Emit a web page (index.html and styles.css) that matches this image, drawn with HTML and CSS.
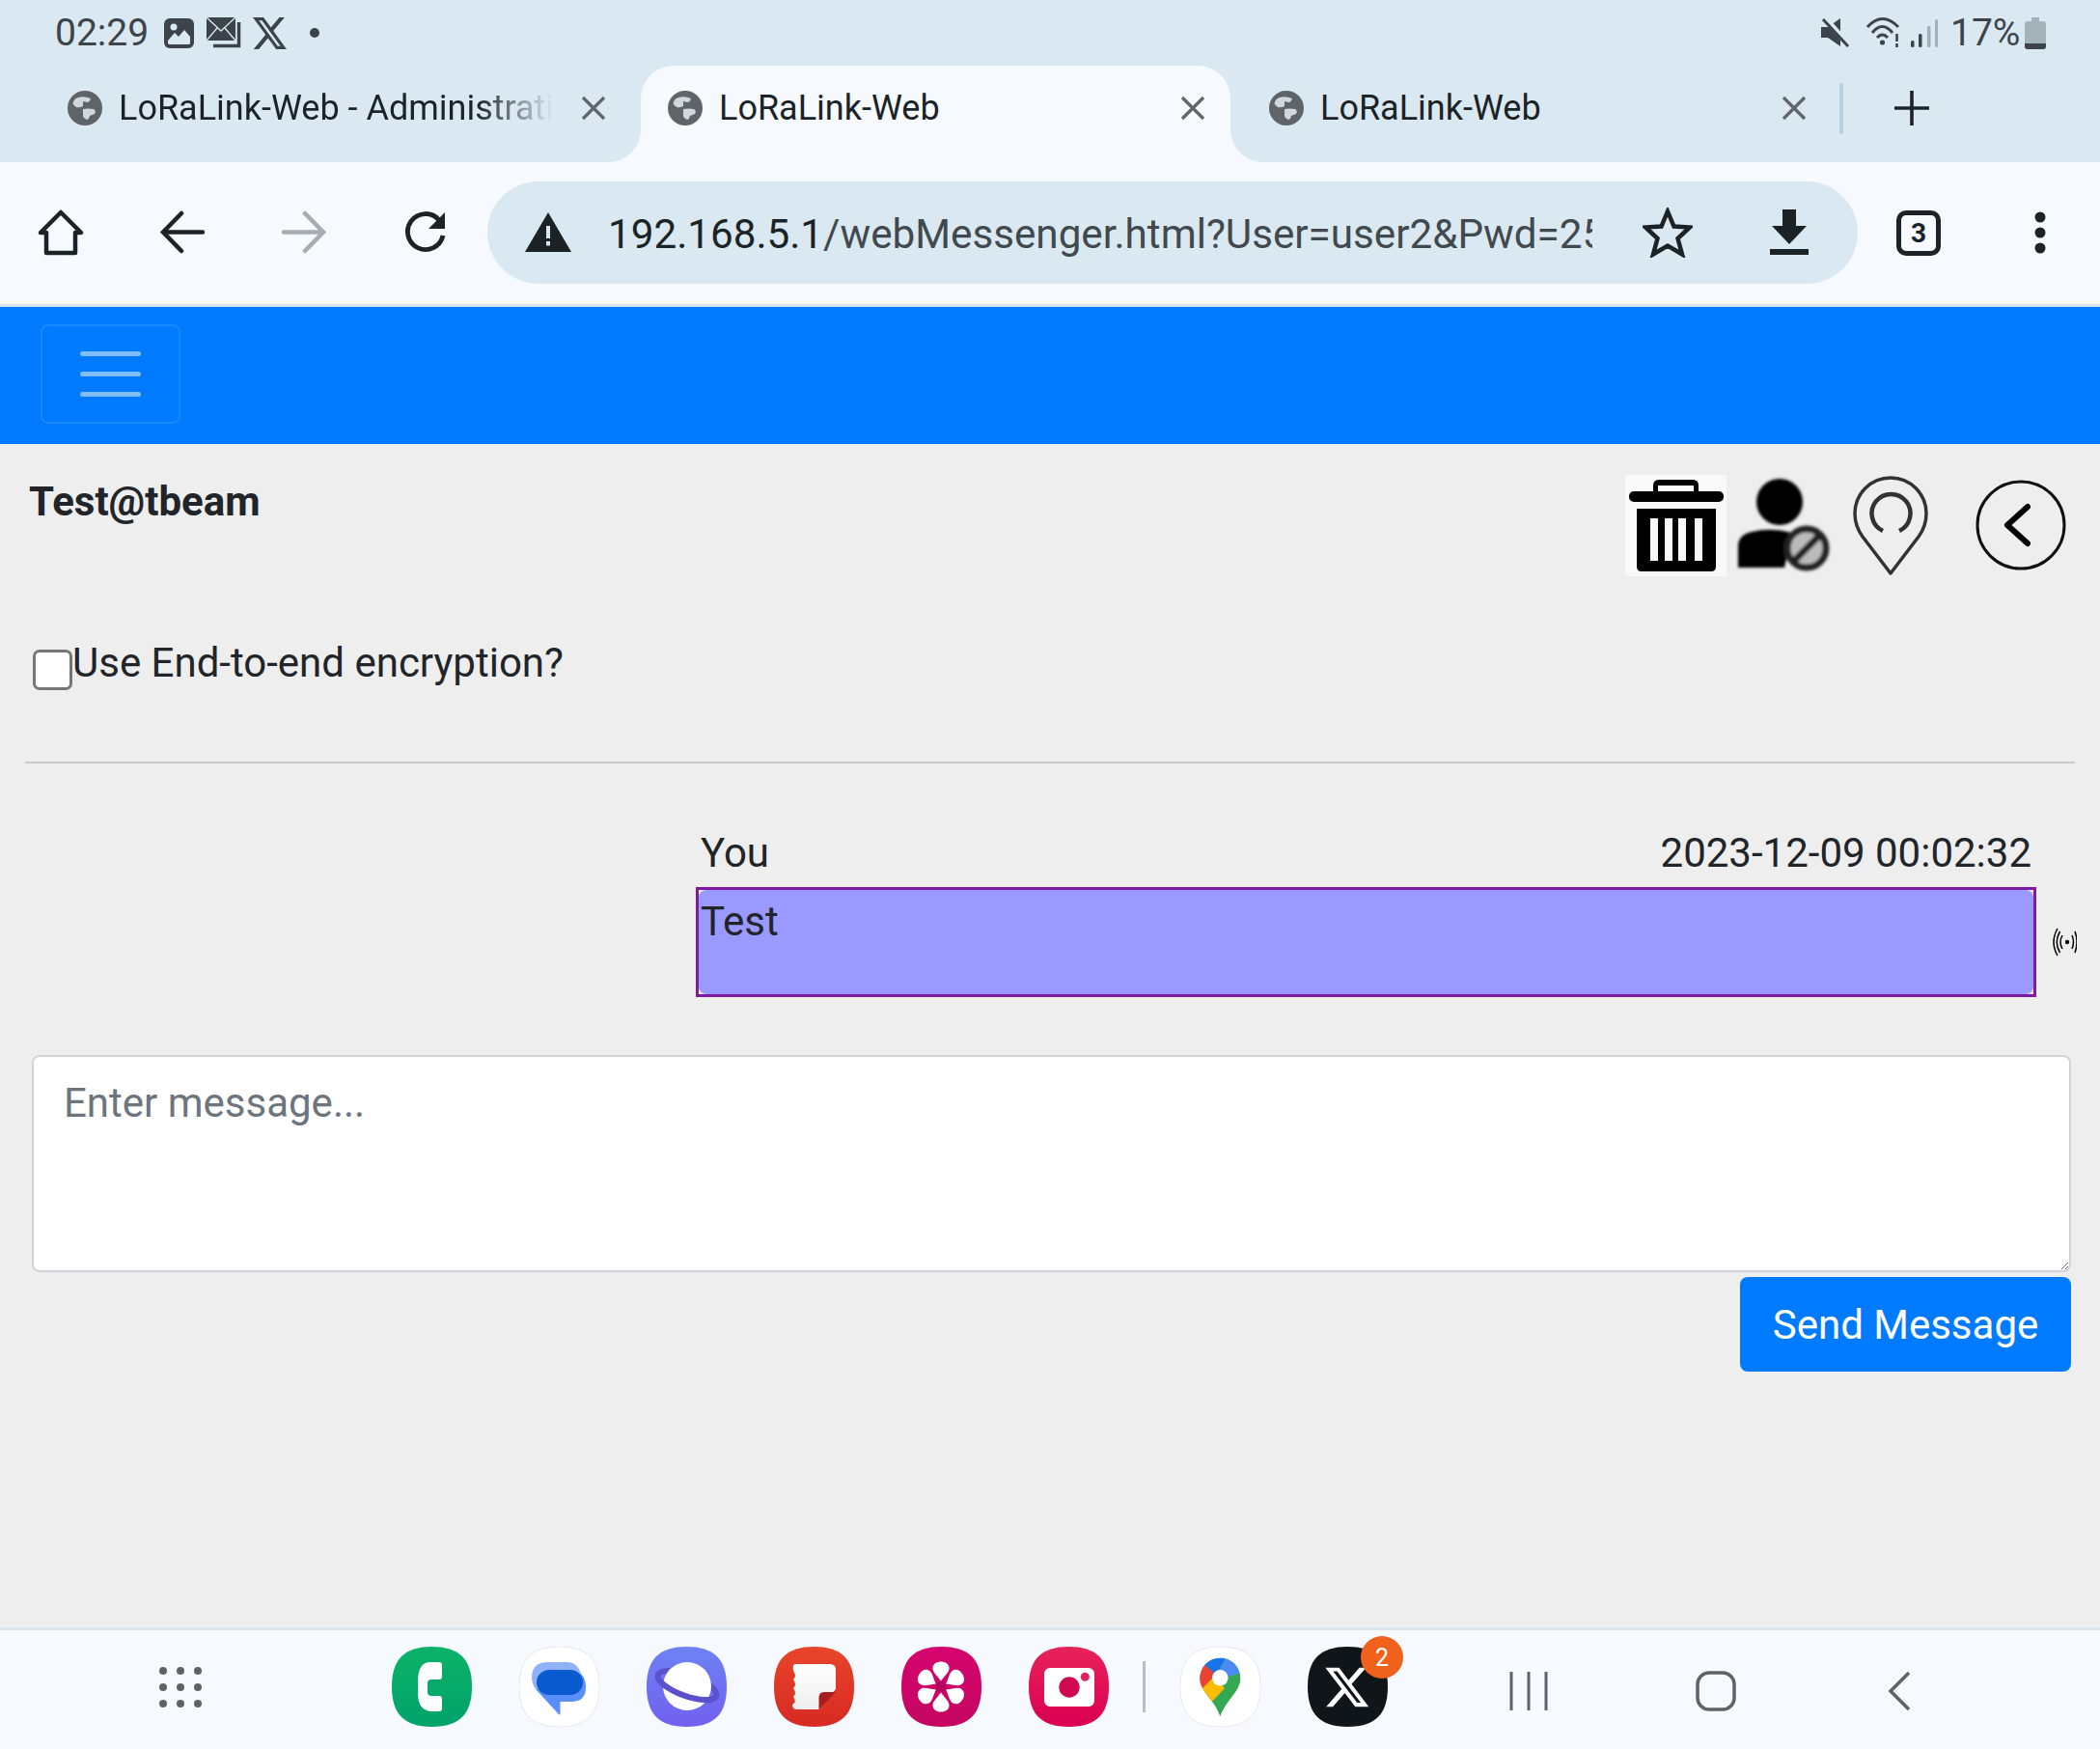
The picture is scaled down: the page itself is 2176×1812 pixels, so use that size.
FILE: index.html
```html
<!DOCTYPE html>
<html lang="en">
<head>
  <meta charset="UTF-8">
  <title>LoRaLink-Web</title>
  <link rel="stylesheet" href="styles.css">
</head>
<body>
  <!-- shared shapes -->
  <svg class="defs-holder" width="0" height="0">
    <symbol id="globe" viewBox="0 0 38 38">
      <circle cx="19" cy="19" r="18" fill="#5f6468"/>
      <path d="M12 8 Q18 6 25 9 Q24 13 21 13 L17 12 Q17 15 17 17 Q13 19 10 18 Q5 14 7 13 Q8 9 12 8 Z" fill="#cfd8dd"/>
      <path d="M17 20 Q22 19 28 20 Q31 22 29 25 L24 27 Q23 31 21 31 Q17 29 17 27 Z" fill="#cfd8dd"/>
    </symbol>
    <path id="sq" d="M41.5 0 C70 0 83 13 83 41.5 C83 70 70 83 41.5 83 C13 83 0 70 0 41.5 C0 13 13 0 41.5 0 Z"/>
  </svg>

  <!-- phone status bar -->
  <div class="status-bar">
    <span class="status-time">02:29</span>
    <svg class="st-image" viewBox="0 0 31 31"><rect width="31" height="31" rx="6" fill="#3c4449"/><circle cx="10" cy="9" r="3.5" fill="#dae8f1"/><path d="M4 26 V23 L11 15 L15 19 L21 12 L27 19 V26 Q27 27 25 27 H6 Q4 27 4 26 Z" fill="#dae8f1"/></svg>
    <svg class="st-mail" viewBox="0 0 36 32"><rect width="30" height="24" fill="#3c4449"/><path d="M0 0 L15 14 L30 0 M0 24 L11 11 M30 24 L19 11" stroke="#dae8f1" stroke-width="1.3" fill="none"/><path d="M33.5 5 V29.5 H7" stroke="#3c4449" stroke-width="3.5" fill="none"/></svg>
    <svg class="st-x" viewBox="1.25 2.25 21.6 19.5" preserveAspectRatio="none"><path fill="#3c4449" d="M18.244 2.25h3.308l-7.227 8.26 8.502 11.24H16.17l-5.214-6.817L4.99 21.75H1.68l7.73-8.835L1.254 2.25H8.08l4.713 6.231zm-1.161 17.52h1.833L7.084 4.126H5.117z"/></svg>
    <span class="st-dot"></span>
    <span class="status-spacer"></span>
    <svg class="st-mute" viewBox="0 0 30 32"><path d="M0 10 H7 L20 1 V30 L7 21 H0 Z" fill="#3c4449"/><path d="M4 1 L31 31" stroke="#dae8f1" stroke-width="6"/><path d="M2 2 L28 30" stroke="#3c4449" stroke-width="3"/></svg>
    <svg class="st-wifi" viewBox="0 0 36 32"><g fill="none" stroke="#3c4449" stroke-width="3"><path d="M2 10 Q17.5 -7 34 10"/><path d="M7 16 Q17.5 3 28 16"/><path d="M12 21 Q17.5 15 23 21"/></g><circle cx="17.5" cy="26" r="2.6" fill="#3c4449"/><path d="M32.5 17 V25 M32.5 27 V31" stroke="#3c4449" stroke-width="2.6"/></svg>
    <svg class="st-signal" viewBox="0 0 28 32"><rect x="0" y="24" width="3.5" height="7" rx="1.5" fill="#3c4449"/><rect x="8" y="17" width="3.5" height="14" rx="1.5" fill="#3c4449"/><rect x="17" y="9" width="3.5" height="22" rx="1.5" fill="#9fb0b9"/><rect x="25" y="2" width="3" height="29" rx="1.5" fill="#9fb0b9"/></svg>
    <span class="status-batt">17%</span>
    <svg class="st-battery" viewBox="0 0 22 33"><path d="M7 0 H15 V4 H19 Q22 4 22 7 V30 Q22 33 19 33 H3 Q0 33 0 30 V7 Q0 4 3 4 H7 Z" fill="#a4b2ba"/><path d="M0 27 H22 V30 Q22 33 19 33 H3 Q0 33 0 30 Z" fill="#3c4449"/></svg>
  </div>

  <!-- browser tabs -->
  <div class="tab-strip">
    <div class="tab tab-first">
      <svg class="favicon" viewBox="0 0 38 38"><use href="#globe"/></svg>
      <span class="tab-title tab-title-fade">LoRaLink-Web - Administration</span>
      <svg class="tab-close" viewBox="0 0 28 28"><path d="M3 3 L25 25 M25 3 L3 25"/></svg>
    </div>
    <div class="tab tab-active">
      <svg class="favicon" viewBox="0 0 38 38"><use href="#globe"/></svg>
      <span class="tab-title">LoRaLink-Web</span>
      <svg class="tab-close" viewBox="0 0 28 28"><path d="M3 3 L25 25 M25 3 L3 25"/></svg>
    </div>
    <div class="tab tab-last">
      <svg class="favicon" viewBox="0 0 38 38"><use href="#globe"/></svg>
      <span class="tab-title">LoRaLink-Web</span>
      <svg class="tab-close" viewBox="0 0 28 28"><path d="M3 3 L25 25 M25 3 L3 25"/></svg>
    </div>
    <span class="tab-sep"></span>
    <svg class="tab-plus" viewBox="0 0 36 36"><path d="M18 0 V36 M0 18 H36" stroke="#1b2327" stroke-width="3.6"/></svg>
  </div>

  <!-- browser toolbar -->
  <div class="toolbar">
    <div class="tool-btn">
      <svg width="48" height="48" viewBox="0 0 48 48"><path d="M24 3 L45 24 H39 V45 H9 V24 H3 Z" fill="none" stroke="#1b2327" stroke-width="4.5" stroke-linejoin="round"/></svg>
    </div>
    <div class="tool-btn">
      <svg width="48" height="48" viewBox="0 0 48 48"><path d="M23 4 L4 23.5 L23 43 M5 23.5 H45" fill="none" stroke="#1b2327" stroke-width="4.5" stroke-linecap="round"/></svg>
    </div>
    <div class="tool-btn">
      <svg width="48" height="48" viewBox="0 0 48 48"><path d="M25 4 L44 23.5 L25 43 M43 23.5 H3" fill="none" stroke="#a5adb2" stroke-width="4.5" stroke-linecap="round"/></svg>
    </div>
    <div class="tool-btn">
      <svg width="48" height="48" viewBox="0 0 48 48"><path d="M38 11 A18.5 18.5 0 1 0 42 27" fill="none" stroke="#1b2327" stroke-width="4.8"/><path d="M44 3 V20 H27 Z" fill="#1b2327"/></svg>
    </div>
    <div class="url-bar">
      <svg class="url-warn" viewBox="0 0 48 42"><path d="M24 0 L48 41 H0 Z" fill="#1b2327"/><rect x="22" y="14" width="4" height="13" fill="#dae8f1"/><rect x="22" y="30" width="4" height="4.5" fill="#dae8f1"/></svg>
      <div class="url-text"><span class="url-host">192.168.5.1</span>/webMessenger.html?User=user2&amp;Pwd=25565</div>
      <div class="tool-btn">
        <svg width="52" height="52" viewBox="0 0 52 52"><path d="M26 4 L32.5 19.5 L49 20.5 L36.5 32 L41 48.5 L26 39.5 L11 48.5 L15.5 32 L3 20.5 L19.5 19.5 Z" fill="none" stroke="#1b2327" stroke-width="4.5"/></svg>
      </div>
      <div class="tool-btn">
        <svg width="40" height="48" viewBox="0 0 40 48"><path d="M13 0 H27 V17 H38 L20 36 L2 17 H13 Z" fill="#1b2327"/><rect x="0" y="41" width="40" height="6" fill="#1b2327"/></svg>
      </div>
      <span class="url-end"></span>
    </div>
    <div class="tool-btn">
      <div class="tab-count">3</div>
    </div>
    <div class="tool-btn">
      <svg width="14" height="46" viewBox="0 0 14 46"><circle cx="7" cy="7" r="5.5" fill="#1b2327"/><circle cx="7" cy="23" r="5.5" fill="#1b2327"/><circle cx="7" cy="39" r="5.5" fill="#1b2327"/></svg>
    </div>
  </div>

  <!-- page navbar -->
  <nav class="navbar">
    <div class="nav-toggle">
      <span class="toggle-line"></span>
      <span class="toggle-line"></span>
      <span class="toggle-line"></span>
    </div>
  </nav>

  <main class="page">
    <div class="chat-head">
      <div class="chat-title">Test@tbeam</div>
      <div class="chat-actions">
        <svg class="act-trash" viewBox="0 0 105 105"><rect width="105" height="105" fill="#f9f9f9"/><path d="M29 17 V11 Q29 5 35 5 H70 Q76 5 76 11 V17 H71 V11 H34 V17 Z" fill="#000"/><rect x="4" y="17" width="98" height="11" rx="5" fill="#000"/><path d="M12 35 H94 V95 Q94 100 89 100 H17 Q12 100 12 95 Z" fill="#000"/><g fill="#f9f9f9"><rect x="26" y="45" width="8" height="44"/><rect x="41" y="45" width="8" height="44"/><rect x="55" y="45" width="8" height="44"/><rect x="72" y="45" width="8" height="44"/></g></svg>
        <svg class="act-block" viewBox="0 0 105 105"><defs><filter id="soft"><feGaussianBlur stdDeviation="1.5"/></filter></defs><g filter="url(#soft)"><circle cx="49" cy="28" r="24" fill="#000"/><path d="M6 96 V74 Q6 62 20 59 Q40 54 62 60 L54 96 Z" fill="#000"/><circle cx="77" cy="76" r="20" fill="#bbb"/><circle cx="77" cy="76" r="20" fill="none" stroke="#222" stroke-width="7"/><path d="M63 90 L91 62" stroke="#222" stroke-width="7"/></g></svg>
        <svg class="act-pin" viewBox="0 0 105 105"><defs><filter id="soft-line"><feGaussianBlur stdDeviation="0.5"/></filter></defs><g fill="none" stroke="#333" stroke-width="3.5" filter="url(#soft-line)"><path d="M53 102 L24 64 Q16 53 16 40 A37 37 0 0 1 90 40 Q90 53 82 64 Z" stroke-linejoin="round"/><path d="M45 58 A20 20 0 1 1 62 58" stroke-width="4.5"/></g></svg>
        <svg class="act-back" viewBox="0 0 105 105"><circle cx="53" cy="52" r="45" fill="none" stroke="#111" stroke-width="3"/><path d="M60 33 L39 52 L60 71" fill="none" stroke="#000" stroke-width="6" stroke-linecap="round" stroke-linejoin="round"/></svg>
      </div>
    </div>

    <label class="e2e-row">
      <input class="e2e-check" type="checkbox">
      <span class="e2e-label">Use End-to-end encryption?</span>
    </label>

    <hr class="divider">

    <div class="msg-wrap">
      <div class="msg-meta">
        <span>You</span>
        <span>2023-12-09 00:02:32</span>
      </div>
      <div class="msg-row">
        <div class="msg-box">
          <div class="msg-bubble">Test</div>
        </div>
        <svg class="msg-radio" viewBox="0 0 26 32"><g fill="none" stroke="#000" stroke-width="1.5"><path d="M6 2 Q-2 16 6 30"/><path d="M8.5 5 Q2 16 8.5 27"/><path d="M11 9 Q7 16 11 23"/><path d="M21 9 Q24 16 21 23"/><path d="M24 5 Q28 16 24 27"/></g><circle cx="16" cy="16" r="2.2" fill="#000"/></svg>
      </div>
    </div>

    <textarea class="msg-input" placeholder="Enter message..."></textarea>
    <div class="send-row">
      <button class="send-btn">Send Message</button>
    </div>
  </main>

  <!-- samsung taskbar -->
  <div class="dock">
    <svg class="dock-grid" viewBox="0 0 44 44"><g fill="#5f6368"><circle cx="4" cy="5" r="4"/><circle cx="22" cy="5" r="4"/><circle cx="40" cy="5" r="4"/><circle cx="4" cy="22" r="4"/><circle cx="22" cy="22" r="4"/><circle cx="40" cy="22" r="4"/><circle cx="4" cy="39" r="4"/><circle cx="22" cy="39" r="4"/><circle cx="40" cy="39" r="4"/></g></svg>

    <!-- phone -->
    <svg class="app" viewBox="0 0 83 83"><defs><linearGradient id="g-phone" x1="0" y1="0" x2="0" y2="1"><stop offset="0" stop-color="#0cb268"/><stop offset="1" stop-color="#00a26a"/></linearGradient></defs><use href="#sq" fill="url(#g-phone)"/><path d="M40 16 H49 Q52 16 52 19 V31 Q52 34 49 34 H41 Q37 34 37 38 V47 Q37 51 41 51 H49 Q52 51 52 54 V64 Q52 67 49 67 H42 Q27 67 27 48 V36 Q27 16 40 16 Z" fill="#fff"/></svg>

    <!-- messages -->
    <svg class="app" viewBox="0 0 83 83"><use href="#sq" fill="#fff" stroke="#e4e8ec"/><path d="M13 32 Q13 16 30 16 H50 Q60 16 64 28 V44 H17 Q13 38 13 32 Z" fill="#8fb2fb"/><path d="M17 44 L40 69 Q42.5 72 42.5 69 V57 H54 Q69 57 69 42 Q69 33 64 28 L30 44 Z" fill="#5a8ffb"/><rect x="18" y="24" width="48" height="26" rx="13" fill="#0a5ad0"/></svg>

    <!-- internet -->
    <svg class="app" viewBox="0 0 83 83"><defs><linearGradient id="g-net" x1="0" y1="0" x2="0" y2="1"><stop offset="0" stop-color="#6d82f4"/><stop offset="1" stop-color="#7160ee"/></linearGradient></defs><use href="#sq" fill="url(#g-net)"/><ellipse cx="42" cy="40" rx="32" ry="11" transform="rotate(20 42 40)" fill="none" stroke="#5c51cc" stroke-width="6"/><circle cx="42" cy="41" r="25" fill="#fff"/><path transform="translate(42 40) rotate(20)" d="M-32 0 A32 11 0 0 0 32 0" fill="none" stroke="#5c51cc" stroke-width="6"/></svg>

    <!-- notes -->
    <svg class="app" viewBox="0 0 83 83"><defs><linearGradient id="g-note" x1="0" y1="0" x2="0" y2="1"><stop offset="0" stop-color="#e8452a"/><stop offset="1" stop-color="#d62a23"/></linearGradient><linearGradient id="g-page" x1="0" y1="0" x2="0" y2="1"><stop offset="0" stop-color="#fff"/><stop offset="1" stop-color="#eee"/></linearGradient></defs><use href="#sq" fill="url(#g-note)"/><path d="M22 18 H58 Q64 18 64 24 V44 L46.5 65 H24 Q19 65 19 60 Q24 57 20 52 Q24 48 20 43 Q24 39 20 34 Q24 30 20 25 Q19 18 22 18 Z" fill="url(#g-page)"/><path d="M46.5 65 V53 Q46.5 47 52 47 H64 Z" fill="#a81d1e"/></svg>

    <!-- gallery -->
    <svg class="app" viewBox="0 0 83 83"><defs><linearGradient id="g-gal" x1="0" y1="0" x2="0" y2="1"><stop offset="0" stop-color="#d5056f"/><stop offset="1" stop-color="#c40660"/></linearGradient><path id="petal" d="M0 -6 C-4 -12 -9 -15 -8.5 -20 C-7.5 -28 7.5 -28 8.5 -20 C9 -15 4 -12 0 -6 Z" fill="#fff"/></defs><use href="#sq" fill="url(#g-gal)"/><g transform="translate(41 41.5)"><use href="#petal"/><use href="#petal" transform="rotate(60)"/><use href="#petal" transform="rotate(120)"/><use href="#petal" transform="rotate(180)"/><use href="#petal" transform="rotate(240)"/><use href="#petal" transform="rotate(300)"/></g><circle cx="41" cy="41.5" r="5.5" fill="#b5045e"/></svg>

    <!-- camera -->
    <svg class="app" viewBox="0 0 83 83"><defs><linearGradient id="g-cam" x1="0" y1="0" x2="0" y2="1"><stop offset="0" stop-color="#e8225a"/><stop offset="1" stop-color="#da0052"/></linearGradient></defs><use href="#sq" fill="url(#g-cam)"/><rect x="16" y="22" width="52" height="40" rx="6" fill="#fff"/><circle cx="42" cy="42" r="10.7" fill="#cf0a50"/><circle cx="58.3" cy="31.3" r="4.5" fill="#e0225a"/></svg>

    <span class="dock-sep"></span>

    <!-- maps -->
    <svg class="app" viewBox="0 0 83 83"><defs><clipPath id="maps-pin"><path d="M41.3 11.7 A21 21 0 0 1 62.3 32.7 C62.3 47 47 55 41.3 72.3 C36 55 20.3 47 20.3 32.7 A21 21 0 0 1 41.3 11.7 Z"/></clipPath></defs><use href="#sq" fill="#fff" stroke="#e4e8ec"/><g clip-path="url(#maps-pin)"><rect x="10" y="5" width="60" height="70" fill="#34a853"/><polygon points="8,54 33,29 46,43 30,60 20,66" fill="#fbbc04"/><polygon points="25.6,19 37,29 20,46 12,35 15,15" fill="#ea4335"/><polygon points="25.6,19 37,29 47.3,12 40,5 20,5" fill="#1a73e8"/><polygon points="47.3,12 37,29 45,32 64,27 70,5 45,5" fill="#4a8af4"/></g><circle cx="41.3" cy="32.3" r="8.3" fill="#fff"/></svg>

    <!-- x -->
    <div class="app-x">
      <svg class="app" viewBox="0 0 83 83"><use href="#sq" fill="#0f1519"/><path transform="translate(15.7 17) scale(2.08)" fill="#fff" d="M18.244 2.25h3.308l-7.227 8.26 8.502 11.24H16.17l-5.214-6.817L4.99 21.75H1.68l7.73-8.835L1.254 2.25H8.08l4.713 6.231zm-1.161 17.52h1.833L7.084 4.126H5.117z"/></svg>
      <span class="app-badge">2</span>
    </div>

    <span class="dock-gap"></span>

    <svg class="nav-recent" viewBox="0 0 40 42"><path d="M2 1 V41 M20 1 V41 M38 1 V41" stroke="#5f6368" stroke-width="3"/></svg>
    <svg class="nav-home" viewBox="0 0 42 42"><rect x="2" y="2" width="38" height="38" rx="12" fill="none" stroke="#5f6368" stroke-width="3.5"/></svg>
    <svg class="nav-back" viewBox="0 0 24 42"><path d="M22 2 L3 21 L22 40" fill="none" stroke="#5f6368" stroke-width="3.5"/></svg>
  </div>
</body>
</html>
```

FILE: styles.css
```css
* {
  box-sizing: border-box;
}
html, body {
  margin: 0;
  height: 100%;
}
body {
  width: 2176px;
  height: 1812px;
  overflow: hidden;
  display: flex;
  flex-direction: column;
  font-family: Roboto, "Noto Sans", sans-serif;
  color: #212529;
  background-color: #eee;
}
.defs-holder {
  display: none;
}

/* status bar */
.status-bar {
  height: 68px;
  display: flex;
  align-items: center;
  padding-left: 57px;
  background-color: #dae8f1;
  color: #3c4449;
  font-size: 39px;
}
.status-time {
  width: 113px;
}
.st-image {
  width: 31px;
  height: 31px;
  margin-right: 13px;
}
.st-mail {
  width: 36px;
  height: 32px;
  margin-right: 12px;
}
.st-x {
  width: 35px;
  height: 33px;
}
.st-dot {
  width: 10px;
  height: 10px;
  margin-left: 24px;
  border-radius: 50%;
  background-color: #3c4449;
}
.status-spacer {
  flex: 1;
}
.st-mute {
  width: 30px;
  height: 32px;
  margin-right: 16px;
}
.st-wifi {
  width: 36px;
  height: 32px;
  margin-right: 11px;
}
.st-signal {
  width: 28px;
  height: 32px;
  margin-right: 13px;
}
.status-batt {
  width: 77px;
}
.st-battery {
  width: 22px;
  height: 33px;
  margin-right: 56px;
}

/* tabs */
.tab-strip {
  height: 100px;
  display: flex;
  align-items: stretch;
  background-color: #dae8f1;
}
.tab {
  display: flex;
  align-items: center;
  position: relative;
  padding-bottom: 12px;
  font-size: 36px;
  color: #1b2327;
}
.tab-first {
  width: 664px;
  padding-left: 69px;
}
.tab-active {
  width: 611px;
  padding-left: 27px;
  background-color: #f6faff;
  border-radius: 34px 34px 0 0;
}
.tab-active::before,
.tab-active::after {
  content: "";
  position: absolute;
  bottom: 0;
  width: 34px;
  height: 34px;
}
.tab-active::before {
  left: -34px;
  background: radial-gradient(circle at 0 0, transparent 33.5px, #f6faff 34.5px);
}
.tab-active::after {
  right: -34px;
  background: radial-gradient(circle at 100% 0, transparent 33.5px, #f6faff 34.5px);
}
.tab-last {
  width: 631px;
  padding-left: 39px;
}
.favicon {
  width: 38px;
  height: 38px;
  flex-shrink: 0;
  margin-right: 16px;
}
.tab-title {
  flex: 1;
  overflow: hidden;
  white-space: nowrap;
}
.tab-title-fade {
  -webkit-mask-image: linear-gradient(to right, #000 80%, transparent 97%);
  mask-image: linear-gradient(to right, #000 80%, transparent 97%);
}
.tab-close {
  width: 28px;
  height: 28px;
  flex-shrink: 0;
  margin-left: 14px;
  margin-right: 25px;
  fill: none;
  stroke: #5f6568;
  stroke-width: 3.2;
}
.tab-first .tab-close {
  margin-right: 35px;
}
.tab-last .tab-close {
  margin-right: 33px;
}
.tab-sep {
  width: 4px;
  height: 53px;
  align-self: center;
  margin-bottom: 12px;
  border-radius: 2px;
  background-color: #b3d2e2;
}
.tab-plus {
  width: 36px;
  height: 36px;
  align-self: center;
  margin-left: 53px;
  margin-bottom: 12px;
}

/* toolbar */
.toolbar {
  height: 150px;
  display: flex;
  align-items: center;
  padding-bottom: 1px;
  background-color: #f6faff;
  border-bottom: 3px solid #dae4ec;
}
.tool-btn {
  width: 126px;
  height: 106px;
  flex-shrink: 0;
  display: flex;
  align-items: center;
  justify-content: center;
}
.url-bar {
  width: 1420px;
  height: 106px;
  margin-left: 1px;
  display: flex;
  align-items: center;
  padding-left: 39px;
  border-radius: 53px;
  background-color: #dae8f1;
}
.url-warn {
  width: 48px;
  height: 42px;
  flex-shrink: 0;
  margin-right: 38px;
}
.url-text {
  width: 1020px;
  flex-shrink: 0;
  margin-right: 15px;
  padding-top: 2px;
  overflow: hidden;
  white-space: nowrap;
  font-size: 42.2px;
  color: #41494e;
}
.url-host {
  color: #1b2327;
}
.url-end {
  width: 8px;
}
.tab-count {
  width: 46px;
  height: 47px;
  display: flex;
  align-items: center;
  justify-content: center;
  border: 5px solid #1b2327;
  border-radius: 10px;
  font-size: 28px;
  font-weight: 700;
  color: #1b2327;
}

/* page */
.navbar {
  height: 142px;
  display: flex;
  align-items: center;
  padding-left: 42px;
  padding-bottom: 3px;
  background-color: #007bff;
}
.nav-toggle {
  width: 145px;
  height: 103px;
  display: flex;
  flex-direction: column;
  align-items: center;
  justify-content: center;
  gap: 16px;
  border: 2px solid rgba(255, 255, 255, 0.1);
  border-radius: 8px;
}
.toggle-line {
  width: 63px;
  height: 5px;
  border-radius: 3px;
  background-color: rgba(255, 255, 255, 0.5);
}
.page {
  flex: 1;
  padding: 32px 30px 0 30px;
}
.chat-head {
  display: flex;
  justify-content: space-between;
  align-items: flex-start;
}
.chat-title {
  font-size: 42px;
  font-weight: 700;
  line-height: 56px;
}
.chat-actions {
  display: flex;
}
.chat-actions svg {
  width: 105px;
  height: 105px;
}
.act-block {
  margin-left: 6px;
}
.act-pin {
  margin-left: 6px;
}
.act-back {
  margin-left: 30px;
}
.e2e-row {
  display: flex;
  margin-top: 58px;
  margin-left: 4px;
}
.e2e-check {
  appearance: none;
  width: 41px;
  height: 42px;
  margin: 18px 0 0 0;
  border: 3px solid #767676;
  border-radius: 7px;
  background-color: #fff;
}
.e2e-label {
  padding-top: 4px;
  font-size: 42px;
  line-height: 56px;
}
.divider {
  height: 2px;
  margin: 74px -4px 0 -4px;
  border: 0;
  background-color: #c9c9c9;
}
.msg-wrap {
  margin-left: 691px;
  margin-right: -6px;
  margin-top: 65px;
}
.msg-meta {
  width: 1389px;
  padding: 0 5px;
  display: flex;
  justify-content: space-between;
  font-size: 42px;
  line-height: 56px;
}
.msg-row {
  display: flex;
  align-items: center;
  margin-top: 7px;
}
.msg-box {
  width: 1389px;
  height: 114px;
  flex-shrink: 0;
  border: 3px solid #8019a6;
  background-color: #f2e6f7;
}
.msg-bubble {
  height: 100%;
  padding: 5px 2px;
  border-radius: 8px;
  background-color: #99f;
  font-size: 42px;
  line-height: 56px;
}
.msg-radio {
  width: 26px;
  height: 32px;
  flex-shrink: 0;
  margin-left: 16px;
}
.msg-input {
  display: block;
  width: 2113px;
  height: 225px;
  margin: 60px 0 0 3px;
  padding: 18px 31px;
  border: 2px solid #ced4da;
  border-radius: 8px;
  background-color: #fff;
  font-family: Roboto, "Noto Sans", sans-serif;
  font-size: 42px;
  line-height: 60px;
  color: #495057;
}
.msg-input::placeholder {
  color: #6c757d;
}
.send-row {
  display: flex;
  justify-content: flex-end;
  margin-top: 5px;
}
.send-btn {
  width: 343px;
  height: 98px;
  border: 0;
  border-radius: 8px;
  background-color: #007bff;
  color: #fff;
  font-family: Roboto, "Noto Sans", sans-serif;
  font-size: 42px;
}

/* taskbar */
.dock {
  height: 126px;
  flex-shrink: 0;
  display: flex;
  align-items: flex-start;
  padding-top: 17px;
  padding-left: 165px;
  border-top: 3px solid #dce4ec;
  background-color: #f6faff;
}
.dock-grid {
  width: 44px;
  height: 44px;
  margin-top: 20px;
  margin-right: 197px;
}
.app {
  display: block;
  width: 83px;
  height: 83px;
  margin-right: 49px;
  flex-shrink: 0;
}
.dock-sep {
  width: 3px;
  height: 53px;
  margin-top: 15px;
  margin-left: -14px;
  margin-right: 36px;
  background-color: #b8bfc4;
}
.app-x {
  position: relative;
}
.app-x .app {
  margin-right: 0;
}
.app-badge {
  position: absolute;
  top: -11px;
  left: 55px;
  width: 44px;
  height: 44px;
  display: flex;
  align-items: center;
  justify-content: center;
  border-radius: 50%;
  background-color: #f0621b;
  color: #fff;
  font-size: 25px;
}
.dock-gap {
  width: 126px;
}
.nav-recent {
  width: 40px;
  height: 42px;
  margin-top: 25px;
  margin-right: 153px;
}
.nav-home {
  width: 42px;
  height: 42px;
  margin-top: 25px;
  margin-right: 157px;
}
.nav-back {
  width: 24px;
  height: 42px;
  margin-top: 25px;
}
```
